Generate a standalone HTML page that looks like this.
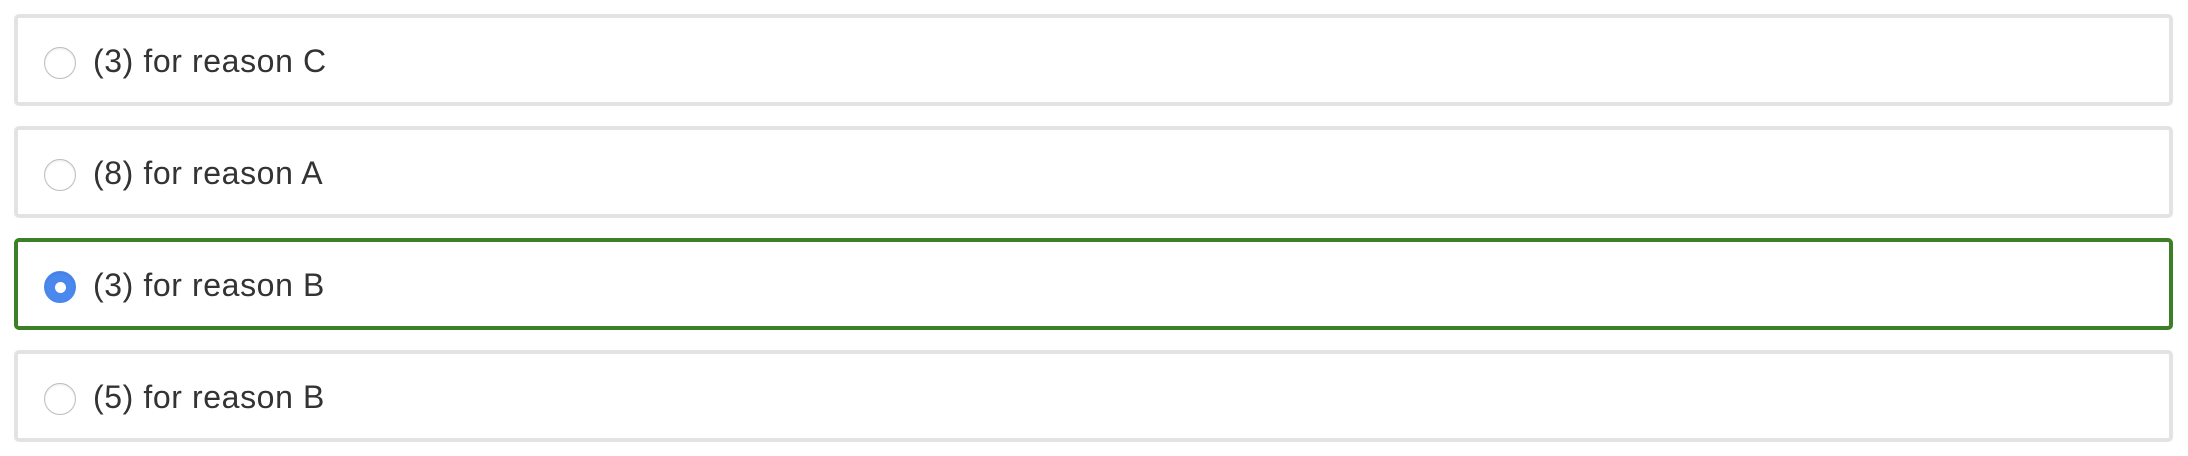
<!DOCTYPE html>
<html><head><style>
html,body{margin:0;padding:0;background:#fff;width:2188px;height:456px;overflow:hidden}
.box{position:absolute;left:14px;width:2151px;height:84px;border:4px solid #e3e3e3;border-radius:5px;box-sizing:content-box}
.sel{border-color:#3d7f27}
.r{position:absolute;left:26px;top:29px;width:30px;height:30px;border:1px solid #bdbdbd;border-radius:50%;background:#fff;box-shadow:inset 0 1px 2px rgba(0,0,0,.08)}
.rs{background:#4a88ee;border-color:#4a88ee}
.rs:after{content:"";position:absolute;left:10px;top:10px;width:11px;height:11px;border-radius:50%;background:#fff}
.t{position:absolute;left:75px;top:24px;font-family:"Liberation Sans",sans-serif;font-size:32px;letter-spacing:0.6px;color:#333;line-height:38px}
</style></head><body>
<div class="box" style="top:14px"><div class="r"></div><div class="t">(3) for reason C</div></div>
<div class="box" style="top:126px"><div class="r"></div><div class="t">(8) for reason A</div></div>
<div class="box sel" style="top:238px"><div class="r rs"></div><div class="t">(3) for reason B</div></div>
<div class="box" style="top:350px"><div class="r"></div><div class="t">(5) for reason B</div></div>
</body></html>
